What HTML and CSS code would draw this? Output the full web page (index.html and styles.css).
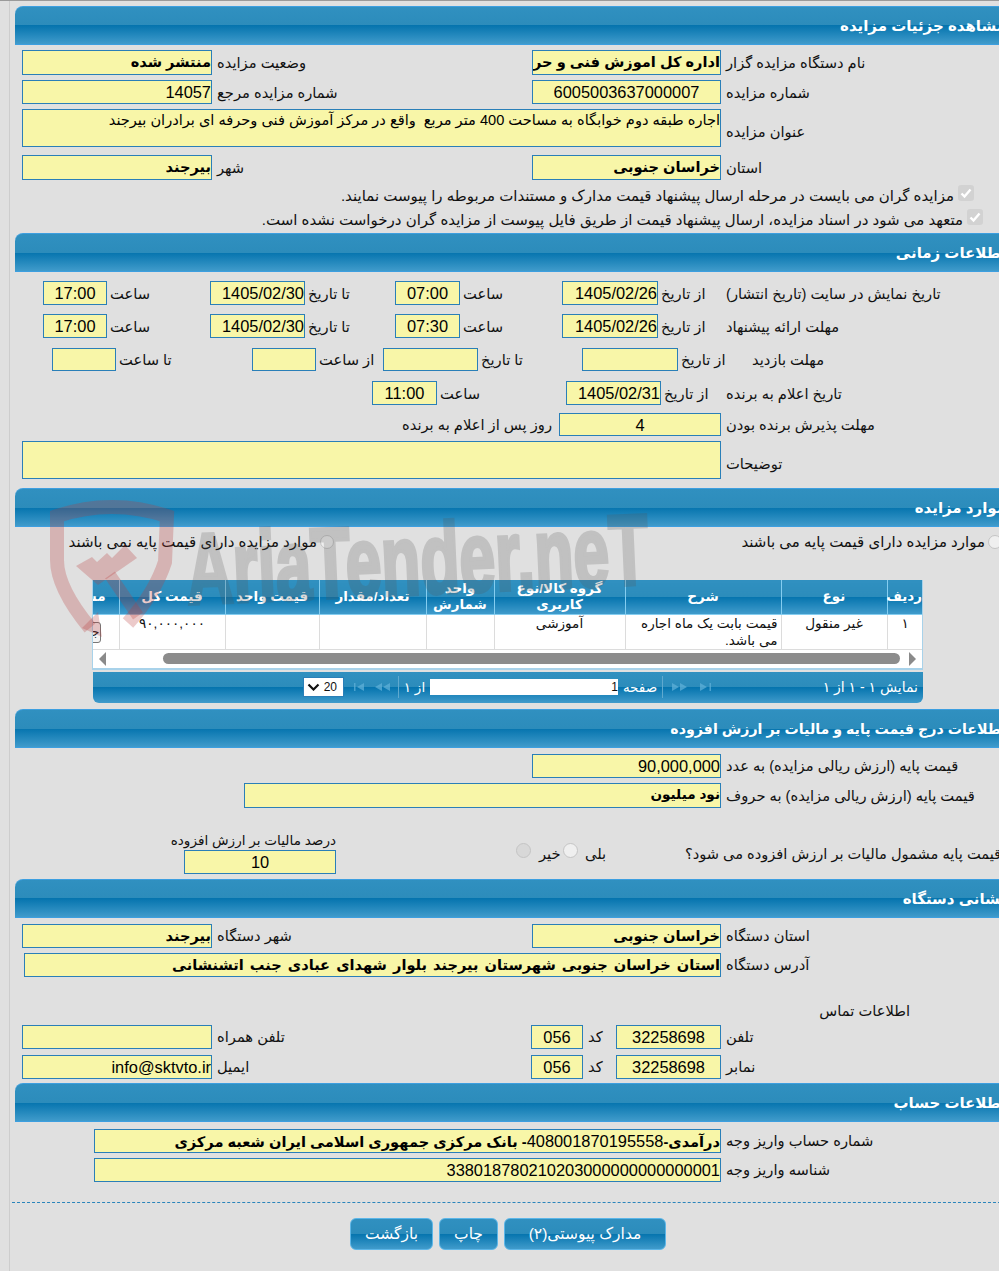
FILE: index.html
```html
<!DOCTYPE html>
<html lang="fa">
<head>
<meta charset="utf-8">
<title>مشاهده جزئیات مزایده</title>
<link rel="stylesheet" href="styles.css">
</head>
<body>
<div class="page">

<section class="panel">
  <h2 class="bar">مشاهده جزئیات مزایده</h2>
  <div class="grid two tall mt5">
    <div class="f b">منتشر شده</div><div class="l">وضعیت مزایده</div>
    <div class="f b">اداره کل اموزش فنی و حرفه ای استان خراسان جنوبی</div><div class="l">نام دستگاه مزایده گزار</div>
  </div>
  <div class="grid two mt5">
    <div class="f num">14057</div><div class="l">شماره مزایده مرجع</div>
    <div class="f num center">6005003637000007</div><div class="l">شماره مزایده</div>
  </div>
  <div class="grid wide mt5">
    <div class="f area">اجاره طبقه دوم خوابگاه به مساحت 400 متر مربع&nbsp; واقع در مرکز آموزش فنی وحرفه ای برادران بیرجند</div><div class="l low">عنوان مزایده</div>
  </div>
  <div class="grid two tall mt8">
    <div class="f b">بیرجند</div><div class="l">شهر</div>
    <div class="f b">خراسان جنوبی</div><div class="l">استان</div>
  </div>
  <div class="check c1 mt4"><span class="box"><svg viewBox="0 0 16 16" width="16" height="16"><path d="M3.500 8.500l3 3 6-7" fill="none" stroke="#fff" stroke-width="2.400"/></svg></span><span>مزایده گران می بایست در مرحله ارسال پیشنهاد قیمت مدارک و مستندات مربوطه را پیوست نمایند.</span></div>
  <div class="check c2"><span class="box"><svg viewBox="0 0 16 16" width="16" height="16"><path d="M3.500 8.500l3 3 6-7" fill="none" stroke="#fff" stroke-width="2.400"/></svg></span><span>متعهد می شود در اسناد مزایده، ارسال پیشنهاد قیمت از طریق فایل پیوست از مزایده گران درخواست نشده است.</span></div>
</section>

<section class="panel mt1">
  <h2 class="bar">اطلاعات زمانی</h2>
  <div class="grid sa mt9">
    <div class="f num center">17:00</div><div class="l">ساعت</div>
    <div class="f num">1405/02/30</div><div class="l">تا تاریخ</div>
    <div class="f num center">07:00</div><div class="l">ساعت</div>
    <div class="f num">1405/02/26</div><div class="l">از تاریخ</div>
    <div class="l end">تاریخ نمایش در سایت (تاریخ انتشار)</div>
  </div>
  <div class="grid sa mt9">
    <div class="f num center">17:00</div><div class="l">ساعت</div>
    <div class="f num">1405/02/30</div><div class="l">تا تاریخ</div>
    <div class="f num center">07:30</div><div class="l">ساعت</div>
    <div class="f num">1405/02/26</div><div class="l">از تاریخ</div>
    <div class="l end">مهلت ارائه پیشنهاد</div>
  </div>
  <div class="grid sc mt10">
    <div class="f short"></div><div class="l">تا ساعت</div>
    <div class="f short"></div><div class="l">از ساعت</div>
    <div class="f short"></div><div class="l">تا تاریخ</div>
    <div class="f short"></div><div class="l">از تاریخ</div>
    <div class="l shift">مهلت بازدید</div>
  </div>
  <div class="grid sd mt10">
    <div class="f num center">11:00</div><div class="l">ساعت</div>
    <div class="f num">1405/02/31</div><div class="l">از تاریخ</div>
    <div class="l end">تاریخ اعلام به برنده</div>
  </div>
  <div class="grid se mt8">
    <div class="l tight">روز پس از اعلام به برنده</div>
    <div class="f num center short">4</div>
    <div class="l">مهلت پذیرش برنده بودن</div>
  </div>
  <div class="grid wide mt5">
    <div class="f area"></div><div class="l low">توضیحات</div>
  </div>
</section>

<section class="panel mt9">
  <h2 class="bar">موارد مزایده</h2>
  <div class="grid radios">
    <div class="radio-line"><span class="radio"></span><span>موارد مزایده دارای قیمت پایه نمی باشند</span></div>
    <div class="radio-line"><span class="radio"></span><span>موارد مزایده دارای قیمت پایه می باشند</span></div>
  </div>
  <div class="table-wrap">
    <table class="items">
      <colgroup><col class="c36"><col class="c106"><col class="c156"><col class="c131"><col class="c68"><col class="c107"><col class="c94"><col class="c106"><col class="c27"></colgroup>
      <thead>
        <tr><th>ردیف</th><th>نوع</th><th>شرح</th><th>گروه کالا/نوع کاربری</th><th>واحد شمارش</th><th>تعداد/مقدار</th><th>قیمت واحد</th><th>قیمت کل</th><th class="clip">مشاهده</th></tr>
      </thead>
      <tbody>
        <tr><td>۱</td><td>غیر منقول</td><td class="desc">قیمت بابت یک ماه اجاره می باشد.</td><td>آموزشی</td><td></td><td></td><td></td><td>۹۰,۰۰۰,۰۰۰</td><td class="clip"><span class="mini">جزئیات</span></td></tr>
      </tbody>
    </table>
    <div class="scroll">
      <svg class="arrow" width="7" height="14" viewBox="0 0 7 14"><path d="M7 0v14L0 7z" fill="#8a8a8a"/></svg>
      <span class="thumb"></span>
      <svg class="arrow" width="7" height="14" viewBox="0 0 7 14"><path d="M0 0v14l7-7z" fill="#8a8a8a"/></svg>
    </div>
  </div>
  <div class="pager">
    <div class="select"><svg width="13" height="8" viewBox="0 0 13 8"><path d="M1.500 1.500l5 5 5-5" fill="none" stroke="#111" stroke-width="2.200"/></svg><span>20</span></div>
    <svg class="nav n1" width="12" height="8" viewBox="0 0 12 8"><path d="M1 0v8h1.500V0zM11 0v8L4 4z" fill="#5fb0d8"/></svg>
    <svg class="nav n2" width="15" height="8" viewBox="0 0 15 8"><path d="M7 0v8L0 4zM15 0v8L8 4z" fill="#5fb0d8"/></svg>
    <span class="sep"></span>
    <span class="of">از ۱</span>
    <div class="page-input">1</div>
    <span class="word">صفحه</span>
    <span class="sep s2"></span>
    <svg class="nav n3" width="15" height="8" viewBox="0 0 15 8"><path d="M0 0v8l7-4zM8 0v8l7-4z" fill="#5fb0d8"/></svg>
    <svg class="nav n4" width="12" height="8" viewBox="0 0 12 8"><path d="M0 0v8l7-4zM9.500 0v8H11V0z" fill="#5fb0d8"/></svg>
    <span class="count">نمایش ۱ - ۱ از ۱</span>
  </div>
</section>

<section class="panel mt6">
  <h2 class="bar long">اطلاعات درج قیمت پایه و مالیات بر ارزش افزوده</h2>
  <div class="grid pa mt6">
    <div class="f num">90,000,000</div><div class="l">قیمت پایه (ارزش ریالی مزایده) به عدد</div>
  </div>
  <div class="grid pb mt5">
    <div class="f b nod">نود میلیون</div><div class="l">قیمت پایه (ارزش ریالی مزایده) به حروف</div>
  </div>
  <div class="grid tax">
    <div class="tax-left">
      <div class="l tax-label">درصد مالیات بر ارزش افزوده</div>
      <div class="f num center">10</div>
    </div>
    <div class="opts">
      <span class="radio r2 dis"></span><span class="l o1">خیر</span>
      <span class="radio r2"></span><span class="l o2">بلی</span>
    </div>
    <div class="l tax-q">قیمت پایه مشمول مالیات بر ارزش افزوده می شود؟</div>
  </div>
</section>

<section class="panel mt5">
  <h2 class="bar">نشانی دستگاه</h2>
  <div class="grid two mt6">
    <div class="f b">بیرجند</div><div class="l">شهر دستگاه</div>
    <div class="f b">خراسان جنوبی</div><div class="l">استان دستگاه</div>
  </div>
  <div class="grid addr mt5">
    <div class="f b spaced">استان خراسان جنوبی شهرستان بیرجند بلوار شهدای عبادی جنب اتشنشانی</div><div class="l">آدرس دستگاه</div>
  </div>
  <div class="contact-title">اطلاعات تماس</div>
  <div class="grid phone">
    <div class="f"></div><div class="l">تلفن همراه</div>
    <div class="f num center">056</div><div class="l">کد</div>
    <div class="f num center">32258698</div><div class="l">تلفن</div>
  </div>
  <div class="grid phone mt6">
    <div class="f num">info@sktvto.ir</div><div class="l">ایمیل</div>
    <div class="f num center">056</div><div class="l">کد</div>
    <div class="f num center">32258698</div><div class="l">نمابر</div>
  </div>
</section>

<section class="panel mt4">
  <h2 class="bar">اطلاعات حساب</h2>
  <div class="grid acct mt7">
    <div class="f b">درآمدی-<span class="num plain">408001870195558</span>- بانک مرکزی جمهوری اسلامی ایران شعبه مرکزی</div><div class="l">شماره حساب واریز وجه</div>
  </div>
  <div class="grid acct mt5">
    <div class="f num">338018780210203000000000000001</div><div class="l">شناسه واریز وجه</div>
  </div>
</section>

<div class="actions">
  <button class="btn b1">بازگشت</button>
  <button class="btn b2">چاپ</button>
  <button class="btn b3">مدارک پیوستی(۲)</button>
</div>

</div>

<svg class="watermark" width="620" height="160" viewBox="0 0 620 160">
  <path d="M40 130 Q7 90 7 62 L7 18 Q62 0 117 18 L115 64 Q105 95 78 125" fill="none" stroke="#b83c3c" stroke-opacity=".27" stroke-width="14"/>
  <path d="M26 68 L42 59 L47 64 L57 55 L62 60 L75 47 L87 60 L48 87z" fill="#b83c3c" fill-opacity=".27"/>
  <path d="M60 77 L88 118" fill="none" stroke="#b83c3c" stroke-opacity=".27" stroke-width="12"/>
  <path d="M32 130 L48 114 L52 139z" fill="#b83c3c" fill-opacity=".27"/>
  <text class="wm-text" x="138" y="106" textLength="462" lengthAdjust="spacingAndGlyphs" transform="rotate(-2.500 138 106)">AriaTender.neT</text>
</svg>
</body>
</html>
```
FILE: styles.css
```css
* { box-sizing: border-box; }
html, body { margin: 0; padding: 0; height: 1271px; overflow: hidden; background: #e0e0e0; }
body {
  font-family: "Liberation Sans", "DejaVu Sans", sans-serif;
  font-size: 15px;
  color: #111;
  position: relative;
  border-top: 1px solid #9a9a9a;
}
body::before {
  content: "";
  position: absolute;
  left: 9px;
  top: 0;
  bottom: 0;
  width: 1px;
  background: #cdcdcd;
}
.page { width: 991px; margin-left: 15px; padding-top: 5px; }

.bar {
  margin: 0;
  height: 39px;
  padding: 8px 0 0 0;
  direction: rtl;
  font-size: 15px;
  line-height: 22px;
  font-weight: bold;
  color: #fff;
  white-space: nowrap;
  border-top: 1px solid #3d9fe0;
  border-bottom: 1px solid #3d9fe0;
  border-top-left-radius: 8px;
  background: linear-gradient(#3090c0 0, #2c8cbb 50%, #0574ae 50%, #409bcb 100%);
}
.long { font-size: 14.2px; }
.mt1 { margin-top: 1px; }
.mt4 { margin-top: 4px; }
.mt5 { margin-top: 5px; }
.mt6 { margin-top: 6px; }
.mt7 { margin-top: 7px; }
.mt8 { margin-top: 8px; }
.mt9 { margin-top: 9px; }
.mt10 { margin-top: 10px; }

.grid { display: grid; align-items: center; padding-left: 7px; }
.two { grid-template-columns: 190px 320px 189px 1fr; }
.wide { grid-template-columns: 699px 1fr; }
.f {
  height: 24px;
  direction: rtl;
  line-height: 22px;
  background: #f8f6a8;
  border: 1px solid #2a7fb8;
  font-size: 14.6px;
  color: #000;
  white-space: nowrap;
  overflow: hidden;
}
.tall .f { height: 25px; }
.short { height: 23px; }
.b { font-size: 14.6px; font-weight: bold; }
.nod { font-size: 13.6px; }
.spaced { word-spacing: 2px; }
.num { font-size: 16.4px; }
.plain { font-weight: normal; }
.center { text-align: center; }
.area { height: 38px; white-space: normal; line-height: 20px; }
.l { direction: rtl; text-align: left; padding-left: 5px; white-space: nowrap; font-size: 14.7px; }
.tight { padding-left: 0; }
.low { padding-top: 6px; }

.check { direction: rtl; display: flex; align-items: center; height: 24px; white-space: nowrap; }
.c1 { padding-right: 32px; }
.c2 { padding-right: 23px; }
.box { width: 16px; height: 16px; margin-left: 4px; background: #d2d2d2; border-radius: 3px; display: block; margin-top: -6px; flex: none; }
.box svg { display: block; }

.sa { grid-template-columns: 64px 103px 95px 90px 65px 102px 96px 68px 1fr; padding-left: 28px; }
.sc { grid-template-columns: 64px 136px 64px 67px 95px 104px 96px 48px 1fr; padding-left: 37px; }
.sd { grid-template-columns: 65px 129px 95px 65px 1fr; padding-left: 357px; }
.se { grid-template-columns: 157px 162px 1fr; padding-left: 387px; }
.sa .l, .sc .l, .sd .l { padding-left: 3px; }
.sa .end, .sd .end { padding-left: 0; }
.sc .shift { padding-left: 26px; }

.radios { grid-template-columns: 312px 1fr; height: 29px; }
.radio-line { direction: rtl; display: flex; align-items: center; white-space: nowrap; }
.radio-line:last-child { padding-right: 4px; }
.radio { display: block; width: 14px; height: 14px; margin-left: 3px; border-radius: 50%; background: #efefef; border: 1px solid #c4c4c4; flex: none; }

.table-wrap { margin: 24px 0 0 77px; width: 831px; border: 1px solid #a8d2ea; border-top: 0; border-bottom: 0; overflow: hidden; background: #fff; }
.items { direction: rtl; width: 831px; table-layout: fixed; border-collapse: collapse; margin-left: -1px; }
.c36 { width: 36px; } .c106 { width: 106px; } .c156 { width: 156px; } .c131 { width: 131px; }
.c68 { width: 68px; } .c107 { width: 107px; } .c94 { width: 94px; } .c27 { width: 27px; }
.items th {
  height: 34px;
  padding: 0 1px;
  color: #fff;
  font-size: 13.5px;
  line-height: 16px;
  font-weight: bold;
  border-left: 1px solid #84cdf0;
  border-bottom: 1px solid #84cdf0;
  background: linear-gradient(#3090c0 0, #2c8cbb 50%, #0574ae 50%, #409bcb 100%);
}
.items td {
  height: 35px;
  padding: 0 3px;
  vertical-align: top;
  text-align: center;
  font-size: 13.6px;
  line-height: 17px;
  border-left: 1px solid #dcdcdc;
  border-bottom: 1px solid #dcdcdc;
}
.items td.desc { text-align: right; }
.items .clip { white-space: nowrap; overflow: hidden; text-align: right; padding: 0; border-left: 0; }
.items th.clip { padding-right: 13px; }
.items td.clip { padding: 7px 18px 0 0; }
.mini { display: inline-block; width: 60px; height: 21px; border: 1px solid #777; border-radius: 3px; background: #f4f4f4; font-size: 12px; line-height: 19px; }

.scroll { height: 20px; display: flex; align-items: center; background: #fff; padding-left: 6px; border-bottom: 2px solid #a8d2ea; }
.thumb { width: 737px; height: 11px; margin: 0 9px 0 57px; border-radius: 6px; background: #8c8c8c; }
.arrow { display: block; }

.pager {
  margin: 2px 0 0 78px;
  width: 830px;
  height: 31px;
  display: flex;
  align-items: center;
  direction: ltr;
  padding-left: 210px;
  color: #fff;
  border-bottom-left-radius: 6px;
  border-bottom-right-radius: 6px;
  background: linear-gradient(#3090c0 0, #2c8cbb 50%, #0574ae 50%, #409bcb 100%);
  white-space: nowrap;
}
.select { width: 41px; height: 20px; background: #fff; border: 1px solid #2a7fb8; display: flex; align-items: center; justify-content: space-between; padding: 0 6px 0 3px; color: #111; font-size: 12px; }
.nav { display: block; flex: none; opacity: .75; }
.n1 { margin-left: 9px; }
.n2 { margin-left: 10px; }
.sep { width: 1px; height: 22px; background: #5fa9cf; margin-left: 8px; }
.of { direction: rtl; font-size: 13.5px; width: 31px; text-align: center; }
.page-input { width: 188px; height: 16px; background: #fff; color: #111; font-size: 12px; line-height: 16px; text-align: right; }
.word { direction: rtl; width: 44px; text-align: center; font-size: 13.5px; }
.s2 { margin-left: 0; }
.n3 { margin-left: 9px; }
.n4 { margin-left: 13px; }
.count { direction: rtl; font-size: 14px; margin-left: auto; padding-right: 5px; }

.pa { grid-template-columns: 189px 1fr; padding-left: 517px; }
.pb { grid-template-columns: 477px 1fr; padding-left: 229px; height: 25px; }
.pb .f { height: 25px; }
.tax { grid-template-columns: 152px 349px 1fr; padding-left: 169px; height: 66px; align-items: end; }
.tax-left .l { padding: 0; text-align: left; line-height: 18px; font-size: 13.6px; }
.opts { display: flex; align-items: center; padding-left: 180px; height: 24px; margin-bottom: 8px; }
.r2 { margin: -6px 0 0 0; width: 15px; height: 15px; }
.dis { background: #d8d8d8; }
.o1 { width: 32px; padding-left: 8px; }
.o2 { padding-left: 7px; }
.tax .tax-q { line-height: 24px; padding-left: 0; margin-bottom: 8px; font-size: 14.6px; }

.addr { grid-template-columns: 697px 1fr; padding-left: 9px; }
.contact-title { direction: rtl; margin: 24px 0 0 805px; width: 90px; height: 24px; line-height: 20px; text-align: left; white-space: nowrap; font-size: 14.7px; }
.phone { grid-template-columns: 190px 319px 52px 33px 105px 1fr; }

.acct { grid-template-columns: 627px 1fr; padding-left: 79px; }

.actions {
  margin: 20px 0 0 -3px;
  padding: 15px 0 0 338px;
  border-top: 1px dashed #2a85bb;
  display: flex;
  gap: 6px;
}
.btn {
  height: 32px;
  direction: rtl;
  font: 15.5px "Liberation Sans", "DejaVu Sans", sans-serif;
  color: #fff;
  border: 1px solid #5cb6e8;
  border-radius: 6px;
  background: linear-gradient(#3090c0 0, #2c8cbb 50%, #0574ae 50%, #409bcb 100%);
  padding: 0;
}
.b1 { width: 83px; }
.b2 { width: 59px; }
.b3 { width: 162px; }

.watermark { position: absolute; left: 50px; top: 497px; pointer-events: none; overflow: visible; }
.wm-text { font-family: "Liberation Sans", sans-serif; font-weight: bold; font-size: 100px; fill: #555; stroke: #555; stroke-width: 4px; opacity: .22; }
```
